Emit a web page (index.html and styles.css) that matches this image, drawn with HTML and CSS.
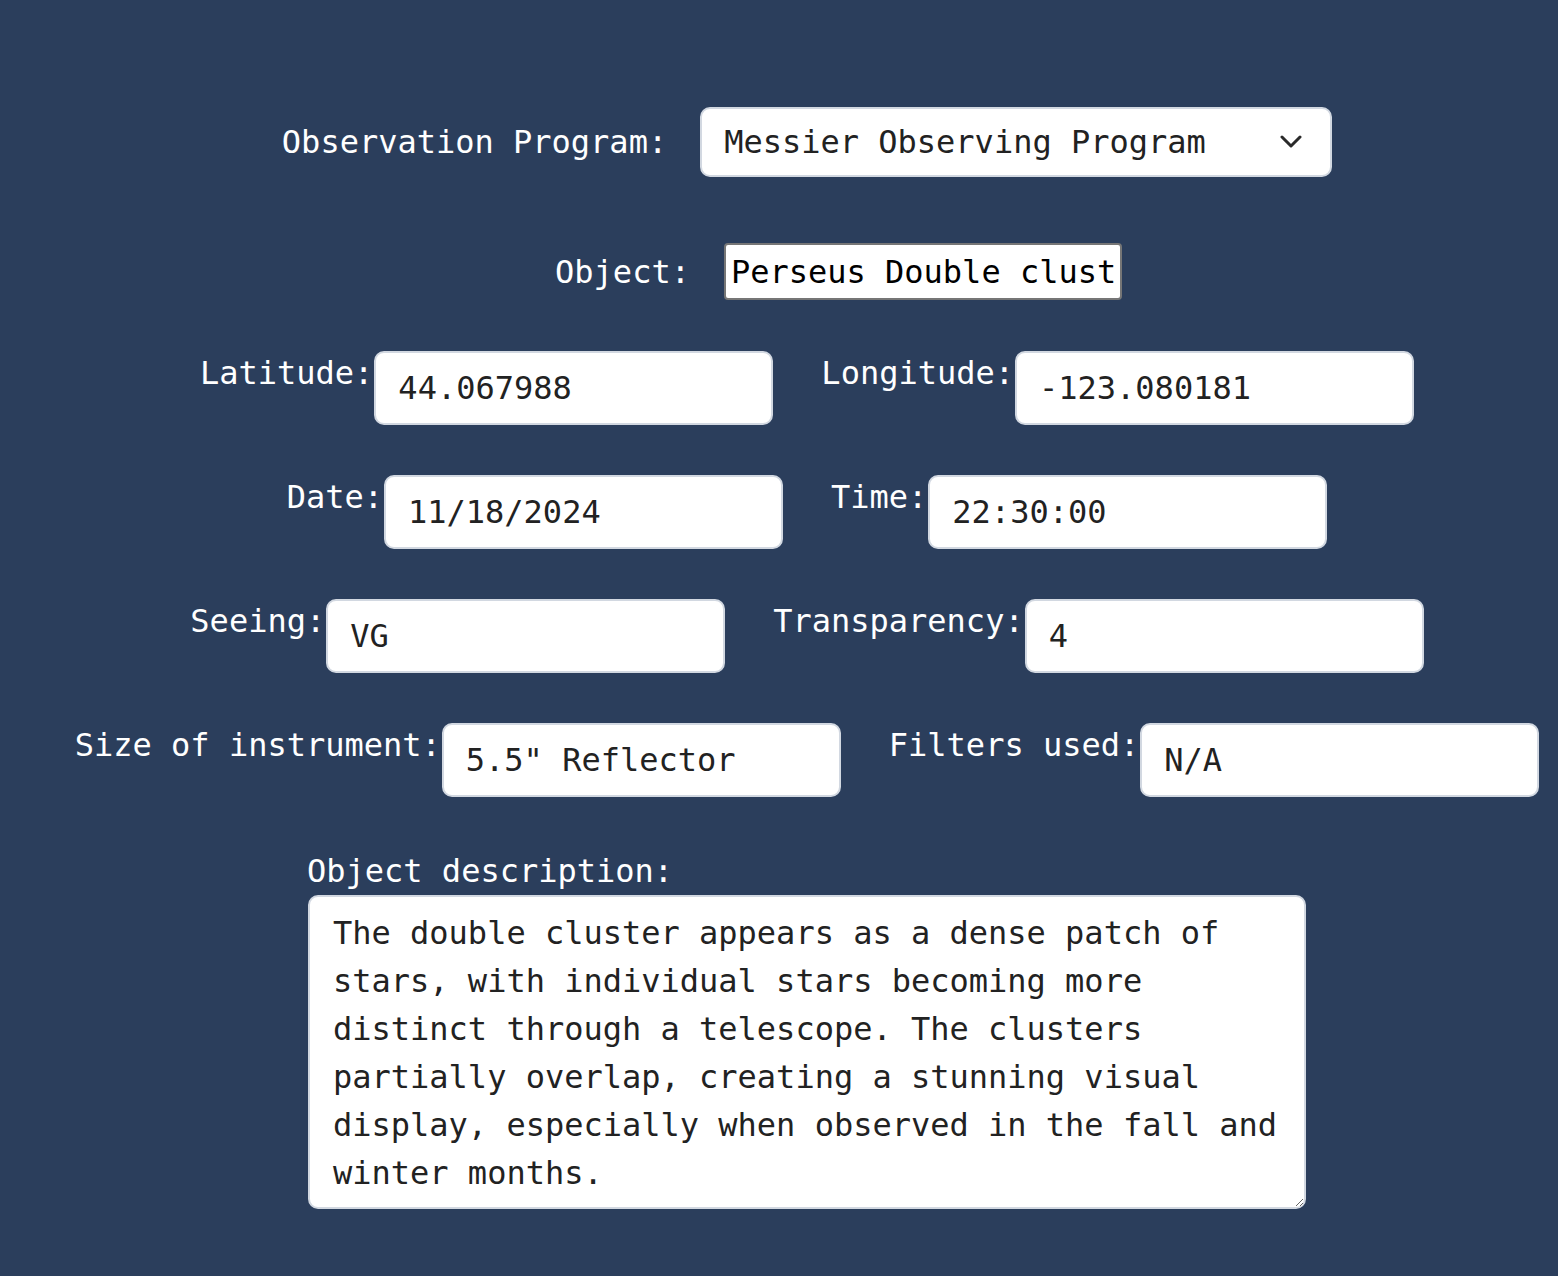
FILE: index.html
```html
<!DOCTYPE html>
<html lang="en">
<head>
<meta charset="utf-8">
<title>Observation Log</title>
<link rel="stylesheet" href="styles.css">
</head>
<body>
<form class="form">
  <div class="row row-program">
    <label class="label" for="program">Observation Program:</label>
    <div class="select-wrap">
      <select id="program" class="select">
        <option>Messier Observing Program</option>
      </select>
      <svg class="chevron" width="22" height="14" viewBox="0 0 22 14" aria-hidden="true">
        <path d="M2 2 L11 11 L20 2" fill="none" stroke="#2a2a2a" stroke-width="3" stroke-linecap="round" stroke-linejoin="round"/>
      </svg>
    </div>
  </div>

  <div class="row row-object">
    <label class="label" for="object">Object:</label>
    <input id="object" class="plain-input" type="text" value="Perseus Double cluster">
  </div>

  <div class="row pair first-pair">
    <div class="field">
      <label class="label" for="lat">Latitude:</label>
      <input id="lat" class="input" type="text" value="44.067988">
    </div>
    <div class="field">
      <label class="label" for="lon">Longitude:</label>
      <input id="lon" class="input" type="text" value="-123.080181">
    </div>
  </div>

  <div class="row pair">
    <div class="field">
      <label class="label" for="date">Date:</label>
      <input id="date" class="input" type="text" value="11/18/2024">
    </div>
    <div class="field">
      <label class="label" for="time">Time:</label>
      <input id="time" class="input" type="text" value="22:30:00">
    </div>
  </div>

  <div class="row pair">
    <div class="field">
      <label class="label" for="seeing">Seeing:</label>
      <input id="seeing" class="input" type="text" value="VG">
    </div>
    <div class="field">
      <label class="label" for="transp">Transparency:</label>
      <input id="transp" class="input" type="text" value="4">
    </div>
  </div>

  <div class="row pair">
    <div class="field">
      <label class="label" for="size">Size of instrument:</label>
      <input id="size" class="input" type="text" value="5.5&quot; Reflector">
    </div>
    <div class="field">
      <label class="label" for="filters">Filters used:</label>
      <input id="filters" class="input" type="text" value="N/A">
    </div>
  </div>

  <div class="desc">
    <label class="label desc-label" for="desc">Object description:</label>
    <textarea id="desc" class="textarea">The double cluster appears as a dense patch of stars, with individual stars becoming more distinct through a telescope. The clusters partially overlap, creating a stunning visual display, especially when observed in the fall and winter months.</textarea>
  </div>
</form>
</body>
</html>
```

FILE: styles.css
```css
* {
  box-sizing: border-box;
}

html, body {
  margin: 0;
  padding: 0;
}

body {
  background: #2b3e5c;
  color: #ffffff;
  font-family: "DejaVu Sans Mono", "Liberation Mono", monospace;
  font-size: 32px;
  line-height: 1.5;
  min-height: 1276px;
}

.form {
  display: flex;
  flex-direction: column;
  align-items: center;
  padding: 107px 0 0 56px;
  margin: 0;
}

.label {
  color: #ffffff;
  white-space: pre;
}

.row {
  display: flex;
}

/* Program row */
.row-program {
  align-items: center;
  gap: 33px;
}

.select-wrap {
  position: relative;
  width: 632px;
  height: 70px;
}

.select {
  appearance: none;
  -webkit-appearance: none;
  width: 100%;
  height: 100%;
  margin: 0;
  border: 2px solid #d2d8e1;
  border-radius: 10px;
  background: #ffffff;
  color: #222222;
  font: inherit;
  line-height: normal;
  padding: 0 22px;
}

.chevron {
  position: absolute;
  right: 30px;
  top: 28px;
  pointer-events: none;
}

/* Object row */
.row-object {
  margin-top: 66px;
  margin-left: 63px;
  align-items: center;
  gap: 34px;
}

.plain-input {
  width: 398px;
  height: 57px;
  margin: 0;
  border: 2px solid #767676;
  border-radius: 4px;
  padding: 2px 4px 2px 5px;
  background: #ffffff;
  color: #000000;
  font: inherit;
  line-height: normal;
}

/* Paired rows */
.pair {
  margin-top: 50px;
  gap: 48px;
  align-items: flex-start;
}

.first-pair {
  margin-top: 51px;
}

.field {
  display: flex;
  align-items: flex-start;
  gap: 0;
}

.field .label {
  margin-top: -2px;
  margin-right: 1px;
}

.input {
  width: 399px;
  height: 74px;
  margin: 0;
  border: 2px solid #d2d8e1;
  border-radius: 10px;
  padding: 0 22px;
  background: #ffffff;
  color: #222222;
  font: inherit;
  line-height: normal;
}

/* Description */
.desc {
  margin-top: 50px;
  display: flex;
  flex-direction: column;
  align-items: flex-start;
}

.desc-label {
  display: block;
  margin-left: -1px;
}

.textarea {
  display: block;
  width: 998px;
  height: 314px;
  margin: 0;
  border: 2px solid #d2d8e1;
  border-radius: 10px;
  padding: 12px 20px 10px 23px;
  background: #ffffff;
  color: #222222;
  font: inherit;
  line-height: 1.5;
  overflow: hidden;
}
```
